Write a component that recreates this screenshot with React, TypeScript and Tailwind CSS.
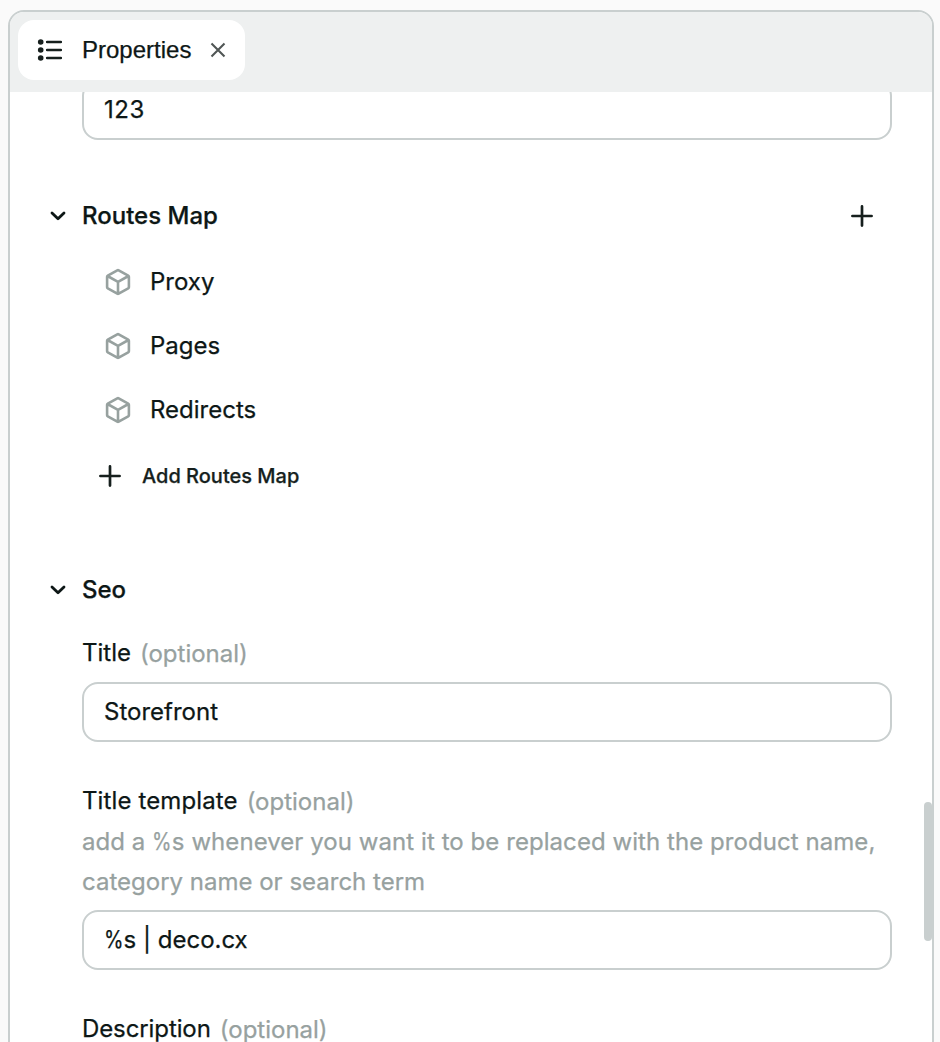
import type { ReactNode } from "react";

function ListIcon() {
  return (
    <svg width="28" height="24" viewBox="0 0 28 24" fill="#161f1d" className="shrink-0">
      <circle cx="4.7" cy="4" r="2.8" />
      <circle cx="4.7" cy="12" r="2.8" />
      <circle cx="4.7" cy="20" r="2.8" />
      <path d="M11.2 4H24.8M11.2 12H24.8M11.2 20H24.8" stroke="#161f1d" strokeWidth="2.7" strokeLinecap="round" />
    </svg>
  );
}

function CloseIcon() {
  return (
    <svg width="16" height="16" viewBox="0 0 16 16" className="shrink-0">
      <path d="M1.5 1.5L14.5 14.5M14.5 1.5L1.5 14.5" stroke="#505655" strokeWidth="2.1" />
    </svg>
  );
}

function ChevronIcon() {
  return (
    <svg width="16" height="12" viewBox="0 0 16 12" fill="none" className="shrink-0">
      <path d="M2 2.9L8 8.8L14 2.9" stroke="#0d1716" strokeWidth="2.8" strokeLinecap="round" strokeLinejoin="round" />
    </svg>
  );
}

function PlusIcon() {
  return (
    <svg width="24" height="24" viewBox="0 0 24 24" fill="none" className="shrink-0">
      <path d="M2.4 12H21.6M12 2.4V21.6" stroke="#161f1d" strokeWidth="2.7" strokeLinecap="round" />
    </svg>
  );
}

function CubeIcon() {
  return (
    <svg width="28" height="28" viewBox="0 0 28 28" fill="none" className="shrink-0">
      <path
        d="M13.3 2.3Q14 1.9 14.7 2.3L24.2 7.6Q24.9 8 24.9 8.8V19.2Q24.9 20 24.2 20.4L14.7 25.7Q14 26.1 13.3 25.7L3.8 20.4Q3.1 20 3.1 19.2V8.8Q3.1 8 3.8 7.6ZM3.5 8L14 13.8L24.5 8M14 13.8V26"
        stroke="#97a19f"
        strokeWidth="2.6"
        strokeLinejoin="round"
      />
    </svg>
  );
}

function Percent() {
  return <span className="-mr-1 inline-block origin-left scale-x-[0.83]">%</span>;
}

function SectionHeading({ title, children }: { title: string; children?: ReactNode }) {
  return (
    <div className="flex h-16 items-center pl-10 pr-[58px]">
      <ChevronIcon />
      <h2 className="ml-4 flex-1 font-medium">{title}</h2>
      {children}
    </div>
  );
}

function Label({ text, className = "" }: { text: string; className?: string }) {
  return (
    <div className="flex h-[42px] items-center whitespace-pre">
      <span className={className}>{text}</span>
      <span className="ml-[9px] pt-[2px] text-[#97a19f]">(optional)</span>
    </div>
  );
}

function Field({ children }: { children: ReactNode }) {
  return (
    <div className="flex h-[60px] w-[810px] shrink-0 items-center rounded-2xl border-2 border-[#c9cfcf] px-5">
      <span>{children}</span>
    </div>
  );
}

export default function App() {
  return (
    <div className="h-[1042px] w-[940px] overflow-hidden bg-[#fafafa] pl-2 pt-[10px] font-['Inter',sans-serif] text-2xl text-[#0d1716] [-webkit-text-stroke:0.25px]">
      <div className="relative flex h-[1060px] w-[926px] flex-col overflow-hidden rounded-2xl border-2 border-[#c9cfcf] bg-white">
        <div className="flex h-20 shrink-0 bg-[#eef0f0] p-2">
          <div className="flex h-[60px] w-[227px] items-center rounded-2xl bg-white pl-[18px]">
            <ListIcon />
            <span className="ml-[18px] w-[128px] font-['Liberation_Sans',sans-serif]">Properties</span>
            <CloseIcon />
          </div>
        </div>
        <div className="min-h-0 flex-1 overflow-hidden">
          <div className="-mt-3 pl-[72px]">
            <Field>
              <span className="tracking-[0.6px]">123</span>
            </Field>
          </div>

          <section className="mt-11">
            <SectionHeading title="Routes Map">
              <PlusIcon />
            </SectionHeading>
            <ul className="mt-[2px] pl-[94px]">
              {["Proxy", "Pages", "Redirects"].map((name) => (
                <li key={name} className="flex h-16 items-center gap-[18px]">
                  <CubeIcon />
                  {name}
                </li>
              ))}
            </ul>
            <button className="flex h-[68px] items-center gap-5 pl-[88px] text-xl font-medium text-[#161f1d]">
              <PlusIcon />
              Add Routes Map
            </button>
          </section>

          <section className="mt-12">
            <SectionHeading title="Seo" />
            <div className="mt-[10px] pl-[72px]">
              <Label text="Title" />
              <div className="mt-2">
                <Field>Storefront</Field>
              </div>
              <div className="mt-[38px]">
                <Label text="Title template" className="tracking-[0.12px]" />
                <p className="mb-2 w-[810px] leading-[40px] text-[#97a19f]">
                  <span className="tracking-[0.06px]">
                    add a <Percent />s whenever you want it to be replaced with the product name,
                  </span>
                  <br />
                  category name or search term
                </p>
                <Field>
                  <Percent />s | deco.cx
                </Field>
              </div>
              <div className="mt-[38px]">
                <Label text="Description" className="tracking-[-0.1px]" />
              </div>
            </div>
          </section>
        </div>
        <div className="absolute right-0 top-[790px] h-[139px] w-2 rounded-full bg-[#c9cfcf]" />
      </div>
    </div>
  );
}
